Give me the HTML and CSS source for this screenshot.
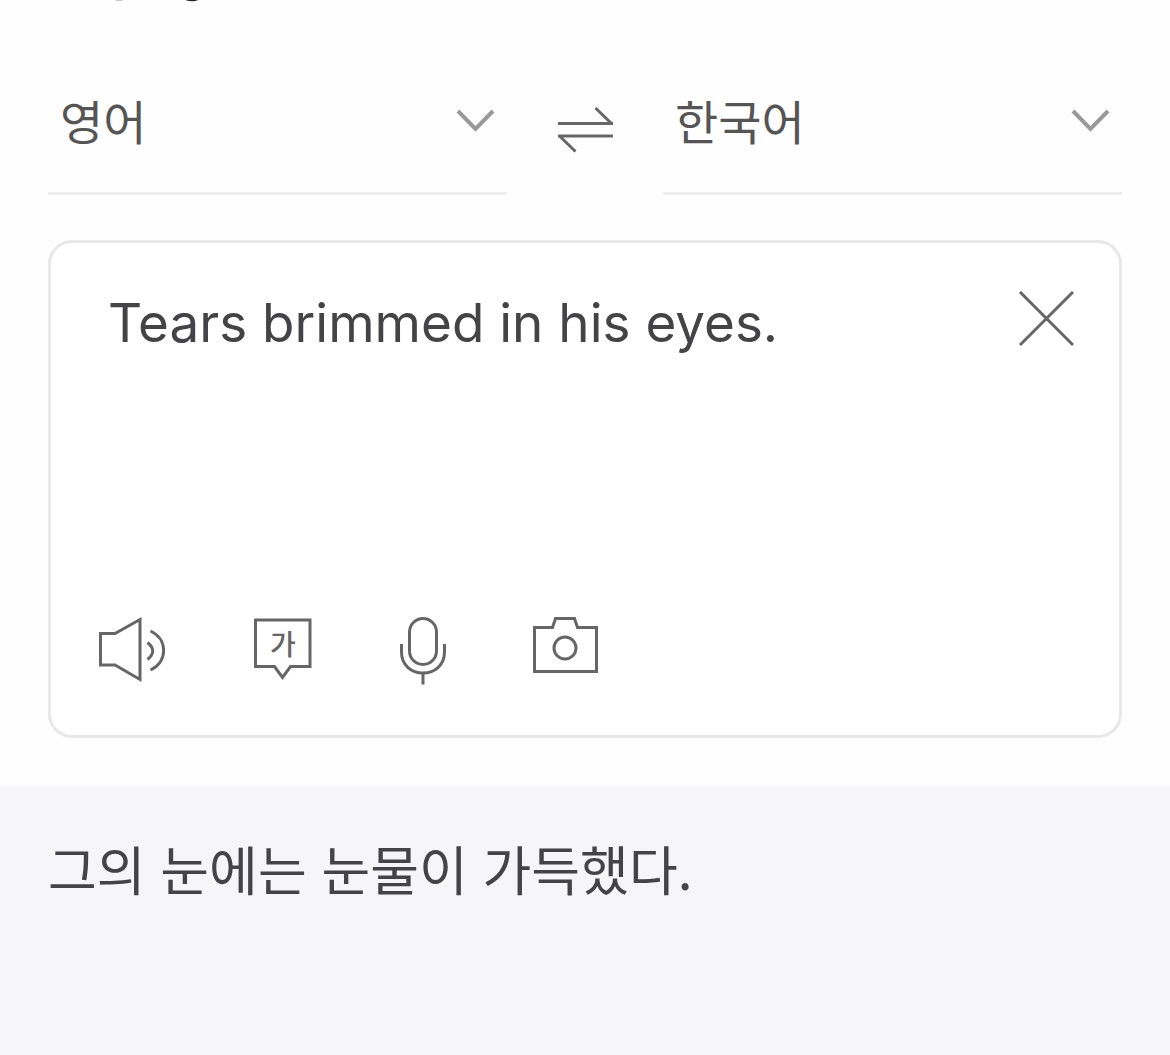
FILE: index.html
```
<!DOCTYPE html>
<html lang="ko">
<head>
  <meta charset="UTF-8" />
  <meta name="viewport" content="width=device-width, initial-scale=1.0" />
  <title>Papago</title>
  <link rel="stylesheet" href="styles.css">
</head>
<body>

<header class="header">
  <a href="#" class="logo">Papago</a>
</header>

<main>
  <div class="languages">
    <div class="language">
      <select id="source-language" aria-label="Source language">
        <option>영어</option>
        <option>한국어</option>
      </select>
      <svg class="chevron" viewBox="0 0 40 40"><path d="M3 9 20.500 27 38 9" /></svg>
    </div>
    <button class="swap" aria-label="Swap languages">
      <svg viewBox="0 0 72 72"><path d="M9 36.500H64M62.500 36.500 46.500 21M64 49H9M11 49.500 26.500 64.500" /></svg>
    </button>
    <div class="language">
      <select id="target-language" aria-label="Target language">
        <option>한국어</option>
        <option>영어</option>
      </select>
      <svg class="chevron" viewBox="0 0 40 40"><path d="M3 9 20.500 27 38 9" /></svg>
    </div>
  </div>

  <div class="editor">
    <div class="input-row">
      <textarea id="source-text" aria-label="Text to translate" spellcheck="false">Tears brimmed in his eyes.</textarea>
      <button class="clear" aria-label="Clear text">
        <svg viewBox="0 0 56 56"><path d="M2 1 55 54M55 1 2 54" /></svg>
      </button>
    </div>

    <div class="tools">
      <button aria-label="Listen">
        <svg viewBox="0 0 96 96">
          <path d="M16.500 31.500H31L56 17.500V77.500L31 63H16.500Z" />
          <path d="M63.500 40.500Q74 49 63.500 57.500M66.500 29C84 37 84 60 66.500 68" />
        </svg>
      </button>
      <button aria-label="Pronunciation">
        <svg viewBox="0 0 96 96">
          <path d="M27.500 18H82V64.500H62.500L54.500 75.500 46.500 64.500H27.500Z" />
          <text x="55" y="53">가</text>
        </svg>
      </button>
      <button aria-label="Voice input">
        <svg viewBox="0 0 96 96">
          <rect x="37.500" y="16.500" width="27" height="46" rx="13.500" />
          <path d="M29.500 42V50C29.500 63 39 71 51 71S72.500 63 72.500 50V42M51 71V82.500" />
        </svg>
      </button>
      <button aria-label="Image input">
        <svg viewBox="0 0 96 96">
          <path d="M18.500 25.500H36.500L39.500 16.500H58.500L61.500 25.500H80.500V69.500H18.500Z" />
          <circle cx="49" cy="46" r="11" />
        </svg>
      </button>
    </div>
  </div>

  <section class="result">
    <p>그의 눈에는 눈물이 가득했다.</p>
  </section>
</main>

</body>
</html>
```
FILE: styles.css
```
* { margin: 0; padding: 0; box-sizing: border-box; }

body {
  font-family: Inter, 'Noto Sans CJK KR', sans-serif;
  background: #fefefe;
  color: #444446;
  min-height: 100vh;
  display: flex;
  flex-direction: column;
}

main {
  flex: 1;
  display: flex;
  flex-direction: column;
}

button {
  background: none;
  border: none;
  cursor: pointer;
}

svg {
  display: block;
  fill: none;
  stroke: #666;
  stroke-width: 3;
}

/* only the foot of the logo stays in view */
.header {
  height: 3px;
  padding: 0 48px;
  display: flex;
  align-items: flex-end;
  overflow: hidden;
}

.logo {
  font-size: 53px;
  font-weight: 600;
  line-height: 64px;
  color: #222;
  text-decoration: none;
}

.languages {
  display: grid;
  grid-template-columns: 1fr 156px 1fr;
  align-items: center;
  margin: 48px 48px 45px;
}

.language {
  display: grid;
  align-items: center;
  height: 144px;
  border-bottom: 3px solid #eeeef1;
}

.language select {
  grid-area: 1 / 1;
  width: 100%;
  height: 100%;
  padding: 0 60px 4px 12px;
  appearance: none;
  background: none;
  border: none;
  font-family: 'Noto Sans CJK KR', sans-serif;
  font-size: 47px;
  color: #555;
}

.chevron {
  grid-area: 1 / 1;
  justify-self: end;
  width: 40px;
  height: 40px;
  margin-right: 12px;
  stroke: #999;
  stroke-width: 4;
  pointer-events: none;
}

.swap {
  justify-self: center;
}

.swap svg {
  width: 72px;
  height: 72px;
}

.editor {
  margin: 0 48px 48px;
  padding: 0 33px 37px;
  background: #fff;
  border: 3px solid #e8e8ea;
  border-radius: 24px;
}

.input-row {
  display: flex;
  align-items: flex-start;
  justify-content: space-between;
  padding: 48px 12px 0 24px;
}

.input-row textarea {
  flex: 1;
  height: 311px;
  border: none;
  outline: none;
  resize: none;
  background: none;
  font-family: Inter, 'Noto Sans CJK KR', sans-serif;
  font-size: 53px;
  line-height: 64px;
  color: #444446;
}

.clear svg {
  width: 56px;
  height: 56px;
}

.tools {
  display: flex;
  gap: 48px;
}

.tools svg {
  width: 96px;
  height: 96px;
}

.tools text {
  font-family: 'Noto Sans CJK KR', sans-serif;
  font-size: 28px;
  font-weight: 500;
  text-anchor: middle;
  fill: #666;
  stroke: none;
}

.result {
  flex: 1;
  padding: 48px;
  background: #f6f6f9;
}

.result p {
  font-family: 'Noto Sans CJK KR', sans-serif;
  font-size: 53px;
  line-height: 68px;
}
```
